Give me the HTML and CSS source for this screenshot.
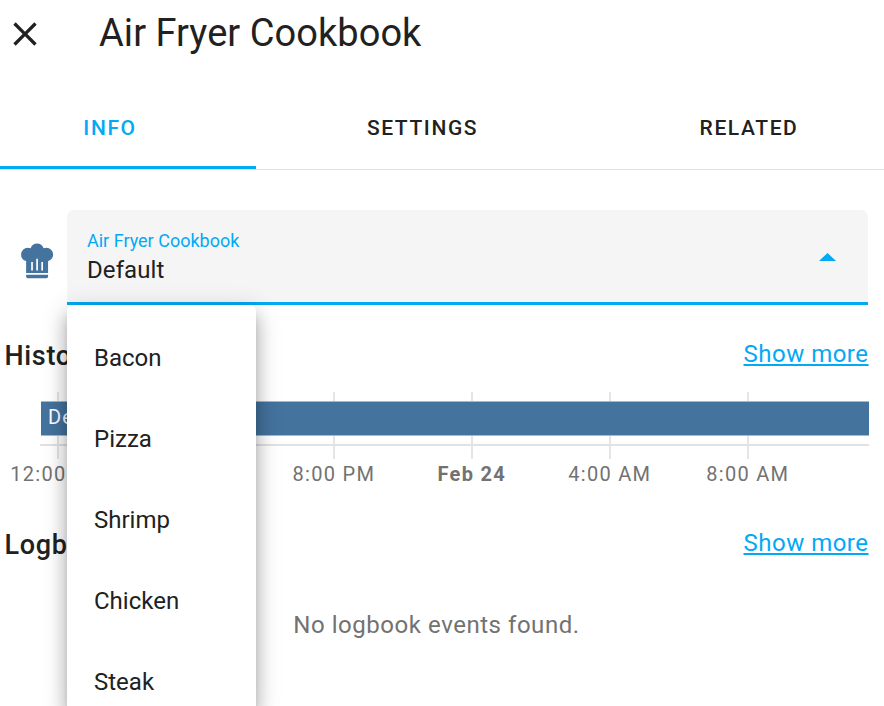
FILE: index.html
```html
<!DOCTYPE html>
<html lang="en">
<head>
<meta charset="utf-8">
<title>Air Fryer Cookbook</title>
<link rel="stylesheet" href="styles.css">
</head>
<body>
<header class="header">
  <svg class="close" viewBox="0 0 24 24"><path d="M19 6.41 17.59 5 12 10.59 6.41 5 5 6.41 10.59 12 5 17.59 6.41 19 12 13.41 17.59 19 19 17.59 13.41 12z"/></svg>
  <h1>Air Fryer Cookbook</h1>
</header>
<nav class="tabs">
  <a class="tab active"><span>INFO</span></a>
  <a class="tab settings"><span>SETTINGS</span></a>
  <a class="tab related"><span>RELATED</span></a>
</nav>
<main>
  <section class="entity">
    <svg class="chef" viewBox="0 0 24 24"><path d="M12.5 1.5c-1.77 0-3.33 1.17-3.83 2.87C8.14 4.13 7.58 4 7 4a4 4 0 0 0-4 4 4.01 4.01 0 0 0 3 3.87V19h13v-7.13c1.76-.46 3-2.05 3-3.87a4 4 0 0 0-4-4c-.58 0-1.14.13-1.67.37-.5-1.7-2.06-2.87-3.83-2.87M12 10.500h1V17.500h-1zm-3 2h1v5H9zm6 0h1v5h-1zM6 20v1a1 1 0 0 0 1 1h11a1 1 0 0 0 1-1v-1z"/></svg>
    <div class="select">
      <div class="field"><span class="label">Air Fryer Cookbook</span><span class="value">Default</span></div>
      <svg class="arrow" viewBox="0 0 17 8"><path d="M0 8 8.500 0 17 8z"/></svg>
      <ul class="menu"><li>Bacon</li><li>Pizza</li><li>Shrimp</li><li>Chicken</li><li>Steak</li></ul>
    </div>
  </section>
  <section class="history">
    <div class="heading"><h2>History</h2><a>Show more</a></div>
    <div class="chart">
      <div class="grid"><i></i><i></i><i></i><i></i><i></i><i></i></div>
      <div class="bar">Default</div>
      <div class="rule"></div>
      <div class="axis"><span>12:00 PM</span><span>4:00 PM</span><span>8:00 PM</span><b>Feb 24</b><span>4:00 AM</span><span>8:00 AM</span></div>
    </div>
  </section>
  <section class="logbook">
    <div class="heading"><h2>Logbook</h2><a>Show more</a></div>
    <p>No logbook events found.</p>
  </section>
</main>
</body>
</html>
```
FILE: styles.css
```css
* { box-sizing: border-box; }
body { margin: 0; width: 884px; height: 706px; overflow: hidden; background: #fff; color: #212121; font-family: Roboto, sans-serif; }
h1, h2, p, ul { margin: 0; padding: 0; font-weight: 400; }
.header { height: 87px; display: flex; align-items: flex-start; padding: 13.5px 0 0 5px; }
.close { width: 40px; height: 40px; fill: #212121; }
.header h1 { margin: -3.5px 0 0 54px; font-size: 38px; line-height: 46px; letter-spacing: .05px; }
.tabs { height: 83px; display: flex; overflow: hidden; border-bottom: 1px solid #e0e0e0; }
.tab { flex: none; height: 82px; display: flex; justify-content: center; font-size: 21px; line-height: 82px; font-weight: 500; letter-spacing: 1.6px; }
.tab.active { width: 256px; padding-right: 36px; color: #03a9f4; border-bottom: 3px solid #03a9f4; }
.settings { width: 333px; }
.related { width: 320px; }
.entity { display: flex; height: 135px; padding: 40px 16px 0; }
.chef { flex: none; width: 40.5px; height: 40.5px; margin: 31px 10.5px 0 0; fill: #44739e; }
.select { position: relative; width: 801px; height: 95px; display: flex; justify-content: space-between; padding: 20px 32px 0 20px; background: #f5f5f5; border-bottom: 3px solid #03a9f4; border-radius: 7px 7px 0 0; }
.field { display: flex; flex-direction: column; }
.label { color: #03a9f4; font-size: 18px; line-height: 22px; }
.value { font-size: 24px; line-height: 36px; letter-spacing: .1px; }
.arrow { width: 17px; height: 8px; margin-top: 23px; fill: #03a9f4; }
.menu { position: absolute; z-index: 2; left: 0; top: 95px; width: 189px; height: 401px; padding: 13px 27px; overflow: hidden; list-style: none; background: #fff; border-radius: 6px 6px 0 0; box-shadow: 0 8px 8px -4px #0003, 0 13px 17px 2px #00000024, 0 5px 24px 4px #0000001f, 0 10px 18px #0001; }
.menu li { height: 81px; font-size: 24px; line-height: 81px; }
.heading { display: flex; justify-content: space-between; padding: 0 15.500px 0 4.500px; line-height: 36px; }
.heading h2 { padding-top: 2px; font-size: 27px; line-height: 36px; font-weight: 500; letter-spacing: .65px; }
.heading a { height: 38px; color: #03a9f4; font-size: 24px; text-decoration: underline; letter-spacing: .5px; }
.history { height: 189px; padding-top: 31px; }
.chart { position: relative; height: 100px; margin: 18px 15px 0 41px; }
.grid { position: absolute; inset: 0; display: flex; gap: 136px; padding-left: 16px; }
.grid i { width: 2px; height: 67px; background: #e5e5e5; }
.bar { position: absolute; left: 0; right: 0; top: 9px; height: 35px; padding-left: 7px; background: #44739e; border: solid #a2b9cf; border-width: 1px 0; color: #fff; font-size: 20px; line-height: 31px; letter-spacing: 1px; }
.rule { position: absolute; left: -1px; right: 0; top: 52px; height: 2px; background: #e2e2e2; }
.axis { position: absolute; left: -52.200px; top: 52px; display: flex; color: #727272; font-size: 20px; line-height: 60px; letter-spacing: 1.3px; }
.axis > * { width: 138px; text-align: center; }
.logbook { padding-top: 31px; }
.logbook p { margin-top: 44px; padding-right: 11px; text-align: center; color: #727272; font-size: 24px; line-height: 36px; letter-spacing: .54px; }
```
